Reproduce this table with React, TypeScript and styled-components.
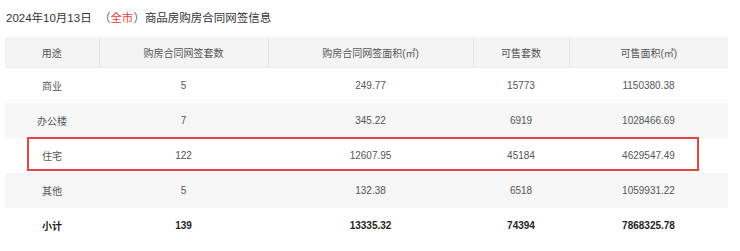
import React from 'react';
import styled, { createGlobalStyle } from 'styled-components';

const GlobalStyle = createGlobalStyle`
  html, body {
    margin: 0;
    padding: 0;
    background: #ffffff;
  }
  body {
    font-family: "Liberation Sans", "Noto Sans CJK SC", sans-serif;
  }
`;

type Row = {
  use: string;
  count: string;
  area: string;
  saleCount: string;
  saleArea: string;
};

const rows: Row[] = [
  { use: '商业', count: '5', area: '249.77', saleCount: '15773', saleArea: '1150380.38' },
  { use: '办公楼', count: '7', area: '345.22', saleCount: '6919', saleArea: '1028466.69' },
  { use: '住宅', count: '122', area: '12607.95', saleCount: '45184', saleArea: '4629547.49' },
  { use: '其他', count: '5', area: '132.38', saleCount: '6518', saleArea: '1059931.22' },
];

const total: Row = { use: '小计', count: '139', area: '13335.32', saleCount: '74394', saleArea: '7868325.78' };

const headers = ['用途', '购房合同网签套数', '购房合同网签面积(㎡)', '可售套数', '可售面积(㎡)'];
const colWidths = [94, 169, 205, 96, 159];

const App = () => {
  return (
    <Page>
      <GlobalStyle />
      <Title>
        2024年10月13日 <Paren>（<City>全市</City>）</Paren>商品房购房合同网签信息
      </Title>

      <TableWrap>
        <Table>
          <colgroup>
            {colWidths.map((w, i) => (
              <col key={i} style={{ width: w }} />
            ))}
          </colgroup>
          <thead>
            <tr>
              {headers.map((h) => (
                <HeadCell key={h}>{h}</HeadCell>
              ))}
            </tr>
          </thead>
          <tbody>
            {rows.map((r, i) => (
              <BodyRow key={r.use} $striped={i % 2 === 1}>
                <Cell>{r.use}</Cell>
                <Cell>{r.count}</Cell>
                <Cell>{r.area}</Cell>
                <Cell>{r.saleCount}</Cell>
                <Cell>{r.saleArea}</Cell>
              </BodyRow>
            ))}
            <BodyRow $striped={false}>
              <Cell $bold>{total.use}</Cell>
              <Cell $bold>{total.count}</Cell>
              <Cell $bold>{total.area}</Cell>
              <Cell $bold>{total.saleCount}</Cell>
              <Cell $bold>{total.saleArea}</Cell>
            </BodyRow>
          </tbody>
        </Table>
        <Highlight />
      </TableWrap>
    </Page>
  );
};

const Page = styled.div`
  width: 740px;
  height: 251px;
  padding: 10px 0 0 6px;
  box-sizing: border-box;
  overflow: hidden;
`;

const Title = styled.div`
  font-size: 11.5px;
  line-height: 16px;
  color: #333333;
  white-space: nowrap;
`;

const Paren = styled.span`
  color: #666666;
  margin-left: 4px;
`;

const City = styled.span`
  color: #f23a3a;
`;

const TableWrap = styled.div`
  position: relative;
  width: 723px;
  margin: 11px 0 0 -1px;
`;

const Table = styled.table`
  width: 723px;
  border-collapse: collapse;
  table-layout: fixed;
  font-size: 10px;
`;

const HeadCell = styled.th`
  height: 30px;
  padding: 0;
  background: #f4f4f4;
  border-left: 1px solid #e6e6e6;
  border-bottom: 1px solid #ececec;
  font-weight: normal;
  color: #555555;
  text-align: center;

  &:first-child {
    border-left: none;
  }
`;

const BodyRow = styled.tr<{ $striped: boolean }>`
  background: ${(p) => (p.$striped ? '#f6f6f6' : '#ffffff')};
`;

const Cell = styled.td<{ $bold?: boolean }>`
  height: 35px;
  padding: 0;
  text-align: center;
  color: ${(p) => (p.$bold ? '#1f1f1f' : '#555555')};
  font-weight: ${(p) => (p.$bold ? 'bold' : 'normal')};
`;

const Highlight = styled.div`
  position: absolute;
  left: 22px;
  top: 100px;
  width: 672px;
  height: 34px;
  border: 2px solid #ec4141;
  box-sizing: border-box;
  pointer-events: none;
`;

export default App;
